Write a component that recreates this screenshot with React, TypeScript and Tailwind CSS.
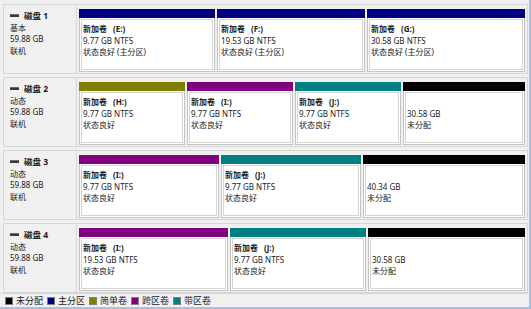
import React from "react";

type Part = {
  w?: number;
  color: string;
  title?: string;
  letter?: string;
  size: string;
  status: string;
  unalloc?: boolean;
};

type Disk = {
  name: string;
  type: string;
  size: string;
  status: string;
  parts: Part[];
};

const P = "#000080";
const S = "#808000";
const SP = "#800080";
const ST = "#008080";
const U = "#000000";

const disks: Disk[] = [
  {
    name: "磁盘 1",
    type: "基本",
    size: "59.88 GB",
    status: "联机",
    parts: [
      { w: 136, color: P, title: "新加卷", letter: "(E:)", size: "9.77 GB NTFS", status: "状态良好 (主分区)" },
      { w: 148, color: P, title: "新加卷", letter: "(F:)", size: "19.53 GB NTFS", status: "状态良好 (主分区)" },
      { color: P, title: "新加卷", letter: "(G:)", size: "30.58 GB NTFS", status: "状态良好 (主分区)" },
    ],
  },
  {
    name: "磁盘 2",
    type: "动态",
    size: "59.88 GB",
    status: "联机",
    parts: [
      { w: 106, color: S, title: "新加卷", letter: "(H:)", size: "9.77 GB NTFS", status: "状态良好" },
      { w: 106, color: SP, title: "新加卷", letter: "(I:)", size: "9.77 GB NTFS", status: "状态良好" },
      { w: 106, color: ST, title: "新加卷", letter: "(J:)", size: "9.77 GB NTFS", status: "状态良好" },
      { color: U, size: "30.58 GB", status: "未分配", unalloc: true },
    ],
  },
  {
    name: "磁盘 3",
    type: "动态",
    size: "59.88 GB",
    status: "联机",
    parts: [
      { w: 140, color: SP, title: "新加卷", letter: "(I:)", size: "9.77 GB NTFS", status: "状态良好" },
      { w: 140, color: ST, title: "新加卷", letter: "(J:)", size: "9.77 GB NTFS", status: "状态良好" },
      { color: U, size: "40.34 GB", status: "未分配", unalloc: true },
    ],
  },
  {
    name: "磁盘 4",
    type: "动态",
    size: "59.88 GB",
    status: "联机",
    parts: [
      { w: 149, color: SP, title: "新加卷", letter: "(I:)", size: "19.53 GB NTFS", status: "状态良好" },
      { w: 136, color: ST, title: "新加卷", letter: "(J:)", size: "9.77 GB NTFS", status: "状态良好" },
      { color: U, size: "30.58 GB", status: "未分配", unalloc: true },
    ],
  },
];

const legend = [
  { c: U, t: "未分配" },
  { c: P, t: "主分区" },
  { c: S, t: "简单卷" },
  { c: SP, t: "跨区卷" },
  { c: ST, t: "带区卷" },
];

function DiskIcon() {
  return (
    <svg width="9" height="5" viewBox="0 0 9 5" className="mr-[5px]">
      <rect x="0" y="1" width="9" height="3" fill="#3a3a3a" />
      <rect x="0" y="1" width="9" height="1" fill="#6a6a6a" />
    </svg>
  );
}

function Partition({ p }: { p: Part }) {
  return (
    <div
      className={`flex flex-col ${p.w ? "shrink-0" : "flex-1"}`}
      style={p.w ? { width: p.w } : undefined}
    >
      <div className="h-[9px]" style={{ backgroundColor: p.color }} />
      <div className="flex-1 border border-t-0 border-[#c4c4c4] bg-white p-[1px]">
        <div className="h-full border border-[#d4d4d4] bg-white pl-[1px] pt-[3px] leading-[11.5px] text-[#1a1a1a]">
          {p.unalloc ? (
            <>
              <div>&nbsp;</div>
              <div>{p.size}</div>
              <div>{p.status}</div>
            </>
          ) : (
            <>
              <div className="font-bold">
                {p.title}
                <span className="ml-[6px]">{p.letter}</span>
              </div>
              <div>{p.size}</div>
              <div>{p.status}</div>
            </>
          )}
        </div>
      </div>
    </div>
  );
}

export default function App() {
  return (
    <div
      className="relative h-[309px] w-[531px] overflow-hidden bg-[#f0f0f0] text-[8px]"
      style={{ fontFamily: '"Noto Sans", "Noto Sans CJK SC", sans-serif' }}
    >
      <div className="flex h-full flex-col border-r-2 border-b-2 border-[#a9c1dc]">
        <div className="flex flex-1 flex-col gap-[3px] pl-[3px] pt-[4px] pr-[1px]">
          {disks.map((d) => (
            <div key={d.name} className="flex h-[70px] border border-[#d6d6d6] bg-[#f0f0f0]">
              <div className="w-[73px] shrink-0 border-r border-[#d6d6d6] pl-[6px] pt-[5px] leading-[11.7px] text-[#1a1a1a]">
                <div className="flex items-center font-bold">
                  <DiskIcon />
                  <span className="text-[8.5px]">{d.name}</span>
                </div>
                <div>{d.type}</div>
                <div>{d.size}</div>
                <div>{d.status}</div>
              </div>
              <div className="flex flex-1 gap-[2px] px-[2px] pt-[4px] pb-[1px]">
                {d.parts.map((p, i) => (
                  <Partition key={i} p={p} />
                ))}
              </div>
            </div>
          ))}
        </div>
        <div className="flex h-[15px] items-center gap-[4px] border-t border-[#d6d6d6] pl-[5px] text-[#1a1a1a]">
          {legend.map((l) => (
            <div key={l.t} className="flex items-center">
              <div className="mr-[3px] h-[8px] w-[8px] border border-[#808080]" style={{ backgroundColor: l.c }} />
              <span className="text-[9px]">{l.t}</span>
            </div>
          ))}
        </div>
      </div>
    </div>
  );
}
